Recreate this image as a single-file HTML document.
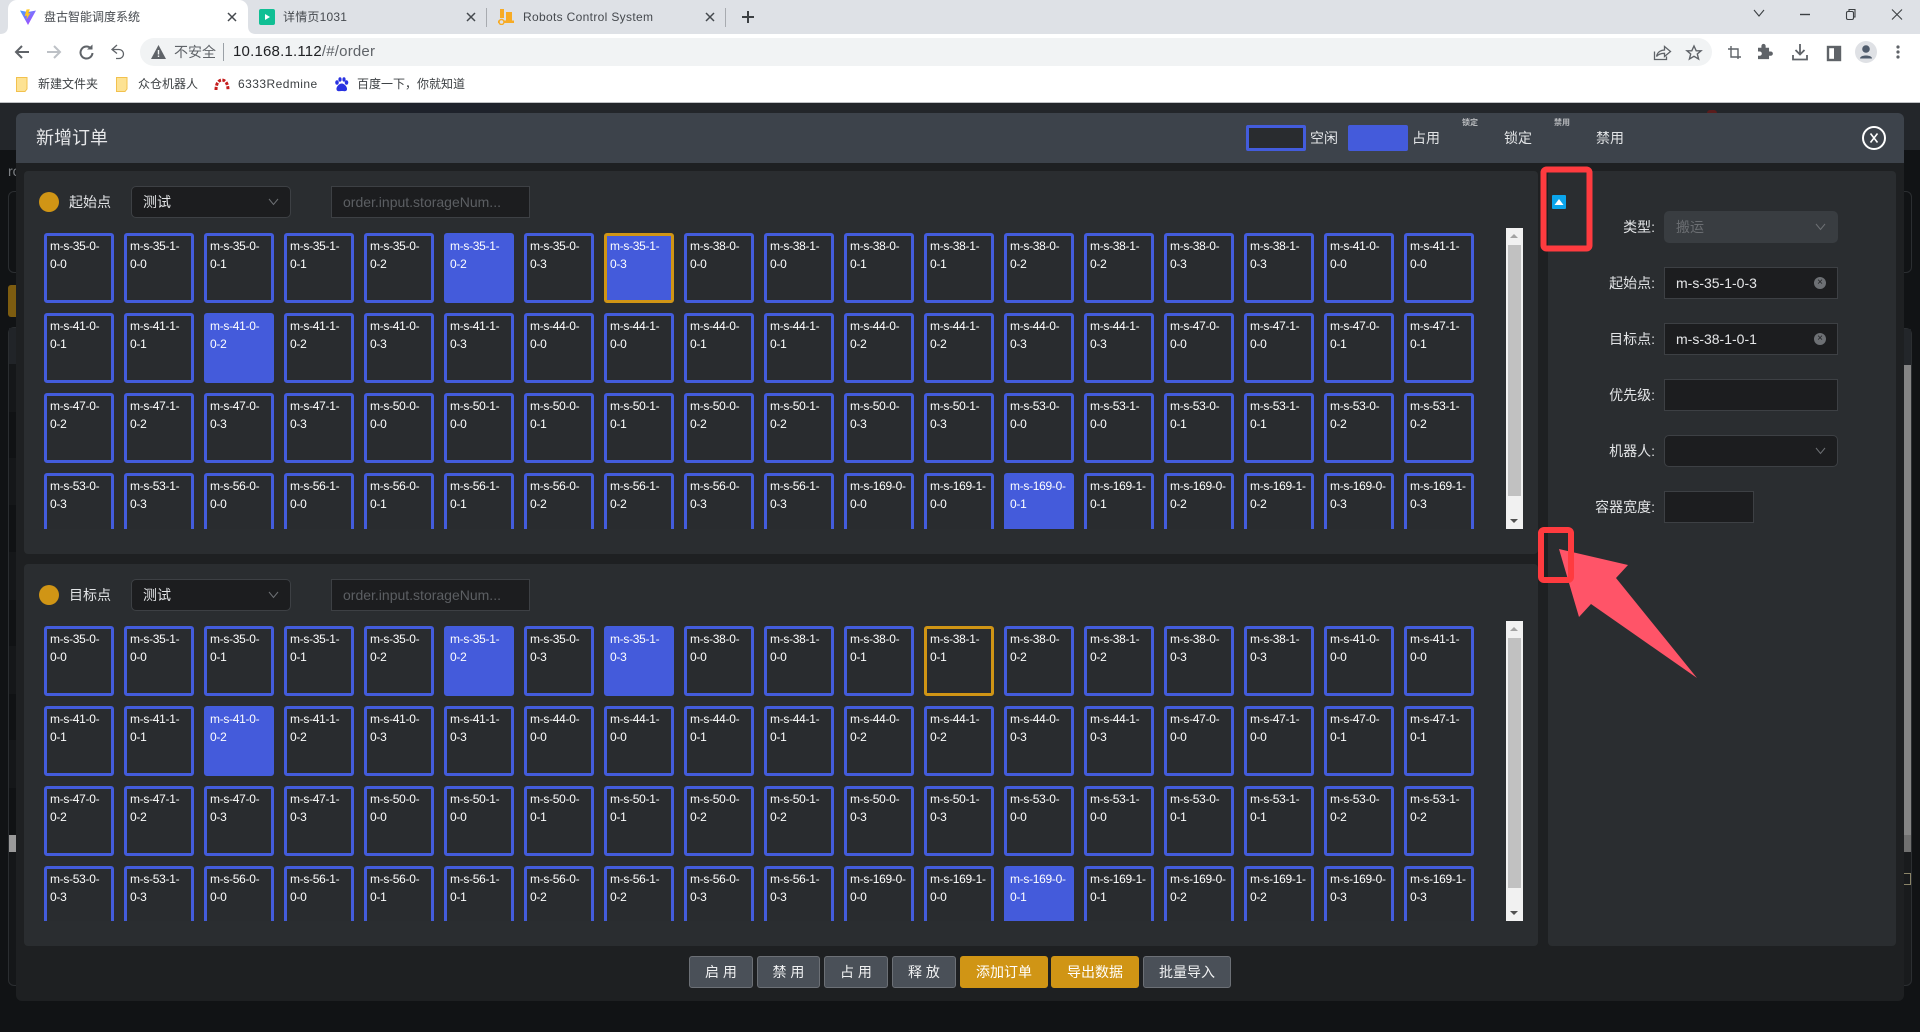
<!DOCTYPE html>
<html lang="zh-CN"><head><meta charset="utf-8"><title>盘古智能调度系统</title>
<style>
html,body{margin:0;padding:0;width:1920px;height:1032px;overflow:hidden;background:#111315}
body{position:relative;font-family:"Liberation Sans","Noto Sans CJK SC",sans-serif;font-size:14px;color:#e2e4e6}
div,span,svg{position:absolute;box-sizing:border-box}
.t{white-space:nowrap;line-height:20px}
.g{left:44px;width:1440px;height:301px;overflow:hidden;display:flex;flex-wrap:wrap;gap:10px;align-content:flex-start;padding-top:5px}
.g b{display:block;box-sizing:border-box;width:70px;height:70px;border:3px solid #435cdc;border-radius:3px;background:#292c2f;padding:1px 0 0 3px;font-weight:400;font-size:12px;line-height:18px;letter-spacing:-.3px;color:#fff;white-space:nowrap}
.g b.u{background:#445bdb}
.g b.o{border-color:#d09515}
.sb{left:1506px;width:17px;height:301px;background:#f1f1f1}
.sb i{position:absolute;left:2px;width:13px;background:#c1c1c1;top:17px;height:251px}
.sb u{position:absolute;left:4px;top:6px;width:0;height:0;border:4px solid transparent;border-top:0;border-bottom:4px solid #a3a3a3}
.sb s{position:absolute;left:4px;bottom:6px;width:0;height:0;border:4px solid transparent;border-bottom:0;border-top:4px solid #505050}
.p{background:#2a2d30;border-radius:4px}
.in{background:#1c1d1f;border:1px solid #3d4044;height:32px}
.sel{border-radius:5px}
.lb{right:265px;text-align:right;line-height:32px;white-space:nowrap;color:#e2e4e6}
.btn{top:956px;height:32px;border-radius:3px;background:#4a5058;border:1px solid #6c7076;color:#f0f1f2;text-align:center;line-height:30px;font-size:14px;white-space:nowrap}
.btn.y{background:#d09515;border-color:#d09515;color:#fff}
.cl{width:12px;height:12px;border-radius:50%;background:#6d7074;color:#1d1e20;font-size:10px;line-height:11px;text-align:center}
.bm{top:74px;font-size:12px;color:#3c4043;white-space:nowrap;line-height:20px}
.tab{top:7px;font-size:12px;color:#45494e;white-space:nowrap;line-height:20px}
</style></head><body>

<!-- dimmed page behind -->
<div style="left:0;top:103px;width:1920px;height:47px;background:#23262a"></div>
<div style="left:400px;top:103px;width:100px;height:10px;background:#1e222b"></div>
<div style="left:1707px;top:110px;width:10px;height:3px;background:#5a1c1c;border-radius:5px 5px 0 0"></div>
<div class="t" style="left:8px;top:161px;font-size:14px;color:#7d8084">ro</div>
<div style="left:8px;top:191px;width:20px;height:82px;border:1px solid #2b2e31;border-radius:6px"></div>
<div style="left:8px;top:285px;width:12px;height:32px;background:#7d5c10;border-radius:3px"></div>
<div style="left:8px;top:327px;width:20px;height:659px;border:1px solid #2b2e31;border-radius:6px;background:#151719"></div>
<div style="left:9px;top:328px;width:10px;height:36px;background:#212428"></div>
<div style="left:9px;top:412px;width:7px;height:46px;background:#101214"></div>
<div style="left:9px;top:505px;width:7px;height:47px;background:#101214"></div>
<div style="left:9px;top:600px;width:7px;height:46px;background:#101214"></div>
<div style="left:9px;top:694px;width:7px;height:46px;background:#101214"></div>
<div style="left:9px;top:788px;width:7px;height:47px;background:#101214"></div>
<div style="left:9px;top:835px;width:7px;height:17px;background:#9a9a9a"></div>
<div style="left:1896px;top:191px;width:16px;height:82px;border:1px solid #2b2e31;border-radius:6px"></div>
<div style="left:1896px;top:328px;width:16px;height:658px;border:1px solid #2b2e31;border-radius:6px;background:#191b1d"></div>
<div style="left:1904px;top:329px;width:7px;height:36px;background:#23262a"></div>
<div style="left:1904px;top:365px;width:7px;height:470px;background:#858585"></div>
<div style="left:1904px;top:835px;width:7px;height:17px;background:#707070"></div>
<div style="left:1904px;top:873px;width:7px;height:12px;border:1px solid #8a8468;border-left:0"></div>

<!-- browser chrome -->
<div style="left:0;top:0;width:1920px;height:34px;background:#dee1e6"></div>
<div style="left:0;top:34px;width:1920px;height:68px;background:#fff"></div>
<div style="left:0;top:102px;width:1920px;height:1px;background:#bfc1c4"></div>
<div style="left:8px;top:0;width:240px;height:34px;background:#fff;border-radius:9px 9px 0 0"></div>
<svg style="left:0;top:24px" width="256" height="10"><path d="M0 10Q8 10 8 2V10ZM248 2Q248 10 256 10H248Z" fill="#fff"/></svg>

<svg style="left:19px;top:8px" width="18" height="18" viewBox="0 0 18 18"><defs><linearGradient id="vg" x1="0" y1="0" x2="1" y2="1"><stop offset="0" stop-color="#41a6ff"/><stop offset="1" stop-color="#bd34fe"/></linearGradient></defs><path d="M1 2.500L9 17 17 2.500 9 4Z" fill="url(#vg)"/><path d="M7.500 1.500L5.800 8 8 7.600 7.400 11.500 11.500 5 9.200 5.500 10.800 1.200Z" fill="#ffc820"/></svg>
<span class="tab" style="left:44px">盘古智能调度系统</span>
<svg style="left:227px;top:12px" width="10" height="10"><path d="M1 1L9 9M9 1L1 9" stroke="#45494e" stroke-width="1.500"/></svg>

<svg style="left:259px;top:9px" width="16" height="16"><rect width="16" height="16" rx="2" fill="#10bf94"/><path d="M6 5L11 8 6 11Z" fill="#fff"/></svg>
<span class="tab" style="left:283px;letter-spacing:.2px">详情页1031</span>
<svg style="left:466px;top:12px" width="10" height="10"><path d="M1 1L9 9M9 1L1 9" stroke="#45494e" stroke-width="1.500"/></svg>
<div style="left:486px;top:8px;width:1px;height:19px;background:#a8abb0"></div>

<svg style="left:498px;top:9px" width="16" height="16"><path d="M2 0H6V9H2ZM8 3H14V12H8Z" fill="#f7ab25"/><path d="M0 11.500H16V14H0Z" fill="#f7ab25"/><circle cx="3.500" cy="13" r="2.500" fill="#dee1e6" stroke="#f7ab25" stroke-width="1.500"/></svg>
<span class="tab" style="left:523px;letter-spacing:.33px">Robots Control System</span>
<svg style="left:705px;top:12px" width="10" height="10"><path d="M1 1L9 9M9 1L1 9" stroke="#45494e" stroke-width="1.500"/></svg>
<div style="left:725px;top:8px;width:1px;height:19px;background:#a8abb0"></div>
<svg style="left:742px;top:11px" width="12" height="12"><path d="M6 0V12M0 6H12" stroke="#3c4043" stroke-width="2"/></svg>

<svg style="left:1620px;top:0" width="300" height="34" fill="none" stroke="#3c4043" stroke-width="1.100"><path d="M134 10L139 16 144 10"/><path d="M180 14.500H190" stroke-width="1.400"/><rect x="226.500" y="11.500" width="7" height="8" rx="1.500"/><path d="M229 11V9.500H235V17H234"/><path d="M272 9.500L282 19.500M282 9.500L272 19.500"/></svg>

<div style="left:140px;top:38px;width:1572px;height:28px;border-radius:14px;background:#f1f3f4"></div>
<svg style="left:14px;top:44px" width="112" height="16" fill="none" stroke-width="2"><path d="M15 8H2M8 2L2 8 8 14" stroke="#5f6368"/><path d="M33 8H46M40 2L46 8 40 14" stroke="#bdc1c6"/><path d="M77 4.500A6 6 0 1 0 78.500 9" stroke="#5f6368"/><path d="M73 5H78.500V0Z" fill="#5f6368" stroke="none" transform="translate(0 .5)"/><path d="M103 1L98 5.500 103 9.500M98.500 5.500H105A4.500 4.500 0 0 1 105 14.500H102" stroke="#5f6368" stroke-width="1.300"/></svg>
<svg style="left:151px;top:45px" width="15" height="14"><path d="M7.500 0L15 14H0Z" fill="#5f6368"/><path d="M6.800 5H8.200V9.500H6.800ZM6.800 10.500H8.200V12H6.800Z" fill="#f1f3f4"/></svg>
<span class="t" style="left:174px;top:42px;font-size:14px;color:#5f6368">不安全</span>
<div style="left:223px;top:43px;width:1px;height:18px;background:#9aa0a6"></div>
<span class="t" style="left:233px;top:42px;font-size:15px;letter-spacing:.2px;color:#202124">10.168.1.112<span style="position:static;color:#5f6368">/#/order</span></span>

<svg style="left:1650px;top:42px" width="260" height="20" fill="none" stroke="#5f6368" stroke-width="1.300"><g transform="translate(1.500 .5)"><path d="M3 9V17H15V14"/><path d="M5 14C6 9 10 7.500 13 7.500V4L19 9 13 14V10.800C10 10.800 7 11.500 5 14Z"/></g><path d="M44 4L46.200 8.800H51L47.300 12 48.600 17 44 14.300 39.400 17 40.700 12 37 8.800H41.800Z" stroke-width="1.400"/><path d="M81 4V15H91M78 7H88V17" stroke-width="1.400"/><g transform="translate(108 4) scale(.85)"><path d="M0 2H4V0A2.300 2.300 0 0 1 9 0V2H13V6.500H15A2.500 2.500 0 0 1 15 11.500H13V15.500H0V11.500H2A2.500 2.500 0 0 0 2 6.500H0Z" fill="#5f6368" stroke="none"/></g><path d="M150 2V12M145.500 8L150 12.500 154.500 8M143 13V17.500H157V13" stroke-width="1.800"/><rect x="178" y="5" width="12" height="13" stroke-width="2.400"/><rect x="184" y="5" width="6" height="13" fill="#5f6368" stroke="none"/></svg>
<div style="left:1855px;top:41px;width:22px;height:22px;border-radius:50%;background:#dfe1e5"></div>
<svg style="left:1855px;top:41px" width="22" height="22"><circle cx="11" cy="8" r="3.800" fill="#4f5b6b"/><path d="M5 17.500C5 13.500 17 13.500 17 17.500Z" fill="#4f5b6b"/></svg>
<svg style="left:1895px;top:45px" width="6" height="14" fill="#5f6368"><circle cx="3" cy="2" r="1.600"/><circle cx="3" cy="7" r="1.600"/><circle cx="3" cy="12" r="1.600"/></svg>

<svg style="left:16px;top:77px" width="112" height="15"><path d="M.5.500H11V12L9 14.500H.5Z" fill="#fde293" stroke="#f2c14e"/><path d="M100.500.500H111V12L109 14.500H100.500Z" fill="#fde293" stroke="#f2c14e"/></svg>
<span class="bm" style="left:38px">新建文件夹</span>
<span class="bm" style="left:138px">众仓机器人</span>
<svg style="left:214px;top:78px" width="16" height="13" fill="none"><path d="M2 12C2 5 5 2 8 2S14 5 14 12" stroke="#c41e1e" stroke-width="3" stroke-dasharray="3 1.400"/></svg>
<span class="bm" style="left:238px;letter-spacing:.45px">6333Redmine</span>
<svg style="left:334px;top:77px" width="15" height="15" fill="#2932e1"><ellipse cx="3" cy="5.500" rx="1.800" ry="2.300"/><ellipse cx="6" cy="2.500" rx="1.600" ry="2.200"/><ellipse cx="10" cy="2.500" rx="1.600" ry="2.200"/><ellipse cx="12.500" cy="5.500" rx="1.800" ry="2.300"/><path d="M7.700 6.500C5 6.500 2 10 2.500 12.500 3 15 6 14 7.700 14S12.500 15 13 12.500 10.500 6.500 7.700 6.500Z"/></svg>
<span class="bm" style="left:357px">百度一下，你就知道</span>

<!-- modal -->
<div style="left:16px;top:113px;width:1888px;height:888px;background:#1e2022;border-radius:6px"></div>
<div style="left:16px;top:113px;width:1888px;height:50px;background:#3d434b;border-radius:6px 6px 0 0"></div>
<span class="t" style="left:36px;top:126px;font-size:18px;line-height:24px;color:#e6e7e9">新增订单</span>

<div style="left:1246px;top:125px;width:60px;height:26px;background:#292c2f;border:3px solid #435cdc;border-radius:2px"></div>
<span class="t" style="left:1310px;top:128px">空闲</span>
<div style="left:1348px;top:125px;width:60px;height:26px;background:#445bdb;border-radius:2px"></div>
<span class="t" style="left:1412px;top:128px">占用</span>
<span class="t" style="left:1462px;top:118px;font-size:8px;line-height:10px;font-weight:700;color:#b8babd">锁定</span>
<span class="t" style="left:1504px;top:128px">锁定</span>
<span class="t" style="left:1554px;top:118px;font-size:8px;line-height:10px;font-weight:700;color:#b8babd">禁用</span>
<span class="t" style="left:1596px;top:128px">禁用</span>
<svg style="left:1862px;top:126px" width="24" height="24" fill="none" stroke="#fff" stroke-width="2"><circle cx="12" cy="12" r="11"/><path d="M8.500 7.500L15.500 16.500M15.500 7.500L8.500 16.500" stroke-width="1.600"/></svg>

<!-- top panel -->
<div class="p" style="left:24px;top:171px;width:1514px;height:383px"></div>
<div style="left:39px;top:192px;width:20px;height:20px;border-radius:50%;background:#d09515"></div>
<span class="t" style="left:69px;top:192px">起始点</span>
<div class="in sel" style="left:131px;top:186px;width:160px"></div>
<span class="t" style="left:143px;top:192px">测试</span>
<svg style="left:268px;top:198px" width="11" height="8" fill="none" stroke="#6d7074"><path d="M1 1L5.500 6.500 10 1"/></svg>
<div class="in" style="left:331px;top:186px;width:199px"></div>
<span class="t" style="left:343px;top:192px;color:#5c5f63">order.input.storageNum...</span>

<div class="g" style="top:228px">
<b>m-s-35-0-<br>0-0</b><b>m-s-35-1-<br>0-0</b><b>m-s-35-0-<br>0-1</b><b>m-s-35-1-<br>0-1</b><b>m-s-35-0-<br>0-2</b><b class="u">m-s-35-1-<br>0-2</b><b>m-s-35-0-<br>0-3</b><b class="u o">m-s-35-1-<br>0-3</b>
<b>m-s-38-0-<br>0-0</b><b>m-s-38-1-<br>0-0</b><b>m-s-38-0-<br>0-1</b><b>m-s-38-1-<br>0-1</b><b>m-s-38-0-<br>0-2</b><b>m-s-38-1-<br>0-2</b><b>m-s-38-0-<br>0-3</b><b>m-s-38-1-<br>0-3</b>
<b>m-s-41-0-<br>0-0</b><b>m-s-41-1-<br>0-0</b><b>m-s-41-0-<br>0-1</b><b>m-s-41-1-<br>0-1</b><b class="u">m-s-41-0-<br>0-2</b><b>m-s-41-1-<br>0-2</b><b>m-s-41-0-<br>0-3</b><b>m-s-41-1-<br>0-3</b>
<b>m-s-44-0-<br>0-0</b><b>m-s-44-1-<br>0-0</b><b>m-s-44-0-<br>0-1</b><b>m-s-44-1-<br>0-1</b><b>m-s-44-0-<br>0-2</b><b>m-s-44-1-<br>0-2</b><b>m-s-44-0-<br>0-3</b><b>m-s-44-1-<br>0-3</b>
<b>m-s-47-0-<br>0-0</b><b>m-s-47-1-<br>0-0</b><b>m-s-47-0-<br>0-1</b><b>m-s-47-1-<br>0-1</b><b>m-s-47-0-<br>0-2</b><b>m-s-47-1-<br>0-2</b><b>m-s-47-0-<br>0-3</b><b>m-s-47-1-<br>0-3</b>
<b>m-s-50-0-<br>0-0</b><b>m-s-50-1-<br>0-0</b><b>m-s-50-0-<br>0-1</b><b>m-s-50-1-<br>0-1</b><b>m-s-50-0-<br>0-2</b><b>m-s-50-1-<br>0-2</b><b>m-s-50-0-<br>0-3</b><b>m-s-50-1-<br>0-3</b>
<b>m-s-53-0-<br>0-0</b><b>m-s-53-1-<br>0-0</b><b>m-s-53-0-<br>0-1</b><b>m-s-53-1-<br>0-1</b><b>m-s-53-0-<br>0-2</b><b>m-s-53-1-<br>0-2</b><b>m-s-53-0-<br>0-3</b><b>m-s-53-1-<br>0-3</b>
<b>m-s-56-0-<br>0-0</b><b>m-s-56-1-<br>0-0</b><b>m-s-56-0-<br>0-1</b><b>m-s-56-1-<br>0-1</b><b>m-s-56-0-<br>0-2</b><b>m-s-56-1-<br>0-2</b><b>m-s-56-0-<br>0-3</b><b>m-s-56-1-<br>0-3</b>
<b>m-s-169-0-<br>0-0</b><b>m-s-169-1-<br>0-0</b><b class="u">m-s-169-0-<br>0-1</b><b>m-s-169-1-<br>0-1</b><b>m-s-169-0-<br>0-2</b><b>m-s-169-1-<br>0-2</b><b>m-s-169-0-<br>0-3</b><b>m-s-169-1-<br>0-3</b>
</div>
<div class="sb" style="top:228px"><u></u><i></i><s></s></div>

<!-- bottom panel -->
<div class="p" style="left:24px;top:564px;width:1514px;height:382px"></div>
<div style="left:39px;top:585px;width:20px;height:20px;border-radius:50%;background:#d09515"></div>
<span class="t" style="left:69px;top:585px">目标点</span>
<div class="in sel" style="left:131px;top:579px;width:160px"></div>
<span class="t" style="left:143px;top:585px">测试</span>
<svg style="left:268px;top:591px" width="11" height="8" fill="none" stroke="#6d7074"><path d="M1 1L5.500 6.500 10 1"/></svg>
<div class="in" style="left:331px;top:579px;width:199px"></div>
<span class="t" style="left:343px;top:585px;color:#5c5f63">order.input.storageNum...</span>

<div class="g" style="top:621px;height:300px">
<b>m-s-35-0-<br>0-0</b><b>m-s-35-1-<br>0-0</b><b>m-s-35-0-<br>0-1</b><b>m-s-35-1-<br>0-1</b><b>m-s-35-0-<br>0-2</b><b class="u">m-s-35-1-<br>0-2</b><b>m-s-35-0-<br>0-3</b><b class="u">m-s-35-1-<br>0-3</b>
<b>m-s-38-0-<br>0-0</b><b>m-s-38-1-<br>0-0</b><b>m-s-38-0-<br>0-1</b><b class="o">m-s-38-1-<br>0-1</b><b>m-s-38-0-<br>0-2</b><b>m-s-38-1-<br>0-2</b><b>m-s-38-0-<br>0-3</b><b>m-s-38-1-<br>0-3</b>
<b>m-s-41-0-<br>0-0</b><b>m-s-41-1-<br>0-0</b><b>m-s-41-0-<br>0-1</b><b>m-s-41-1-<br>0-1</b><b class="u">m-s-41-0-<br>0-2</b><b>m-s-41-1-<br>0-2</b><b>m-s-41-0-<br>0-3</b><b>m-s-41-1-<br>0-3</b>
<b>m-s-44-0-<br>0-0</b><b>m-s-44-1-<br>0-0</b><b>m-s-44-0-<br>0-1</b><b>m-s-44-1-<br>0-1</b><b>m-s-44-0-<br>0-2</b><b>m-s-44-1-<br>0-2</b><b>m-s-44-0-<br>0-3</b><b>m-s-44-1-<br>0-3</b>
<b>m-s-47-0-<br>0-0</b><b>m-s-47-1-<br>0-0</b><b>m-s-47-0-<br>0-1</b><b>m-s-47-1-<br>0-1</b><b>m-s-47-0-<br>0-2</b><b>m-s-47-1-<br>0-2</b><b>m-s-47-0-<br>0-3</b><b>m-s-47-1-<br>0-3</b>
<b>m-s-50-0-<br>0-0</b><b>m-s-50-1-<br>0-0</b><b>m-s-50-0-<br>0-1</b><b>m-s-50-1-<br>0-1</b><b>m-s-50-0-<br>0-2</b><b>m-s-50-1-<br>0-2</b><b>m-s-50-0-<br>0-3</b><b>m-s-50-1-<br>0-3</b>
<b>m-s-53-0-<br>0-0</b><b>m-s-53-1-<br>0-0</b><b>m-s-53-0-<br>0-1</b><b>m-s-53-1-<br>0-1</b><b>m-s-53-0-<br>0-2</b><b>m-s-53-1-<br>0-2</b><b>m-s-53-0-<br>0-3</b><b>m-s-53-1-<br>0-3</b>
<b>m-s-56-0-<br>0-0</b><b>m-s-56-1-<br>0-0</b><b>m-s-56-0-<br>0-1</b><b>m-s-56-1-<br>0-1</b><b>m-s-56-0-<br>0-2</b><b>m-s-56-1-<br>0-2</b><b>m-s-56-0-<br>0-3</b><b>m-s-56-1-<br>0-3</b>
<b>m-s-169-0-<br>0-0</b><b>m-s-169-1-<br>0-0</b><b class="u">m-s-169-0-<br>0-1</b><b>m-s-169-1-<br>0-1</b><b>m-s-169-0-<br>0-2</b><b>m-s-169-1-<br>0-2</b><b>m-s-169-0-<br>0-3</b><b>m-s-169-1-<br>0-3</b>
</div>
<div class="sb" style="top:621px;height:300px"><u></u><i style="height:250px"></i><s></s></div>

<!-- right panel -->
<div class="p" style="left:1548px;top:171px;width:348px;height:775px"></div>
<div class="lb" style="top:211px">类型:</div>
<div style="left:1664px;top:211px;width:174px;height:32px;background:#393d41;border-radius:5px"></div>
<span class="t" style="left:1676px;top:217px;color:#6b6e72">搬运</span>
<svg style="left:1815px;top:223px" width="11" height="8" fill="none" stroke="#6d7074"><path d="M1 1L5.500 6.500 10 1"/></svg>

<div class="lb" style="top:267px">起始点:</div>
<div class="in" style="left:1664px;top:267px;width:174px"></div>
<span class="t" style="left:1676px;top:273px;color:#e6e7e9">m-s-35-1-0-3</span>
<div class="cl" style="left:1814px;top:277px">×</div>

<div class="lb" style="top:323px">目标点:</div>
<div class="in" style="left:1664px;top:323px;width:174px"></div>
<span class="t" style="left:1676px;top:329px;color:#e6e7e9">m-s-38-1-0-1</span>
<div class="cl" style="left:1814px;top:333px">×</div>

<div class="lb" style="top:379px">优先级:</div>
<div class="in" style="left:1664px;top:379px;width:174px"></div>

<div class="lb" style="top:435px">机器人:</div>
<div class="in sel" style="left:1664px;top:435px;width:174px"></div>
<svg style="left:1815px;top:447px" width="11" height="8" fill="none" stroke="#6d7074"><path d="M1 1L5.500 6.500 10 1"/></svg>

<div class="lb" style="top:491px">容器宽度:</div>
<div class="in" style="left:1664px;top:491px;width:90px"></div>

<!-- footer -->
<div class="btn" style="left:689px;width:64px">启 用</div>
<div class="btn" style="left:757px;width:63px">禁 用</div>
<div class="btn" style="left:824px;width:64px">占 用</div>
<div class="btn" style="left:892px;width:64px">释 放</div>
<div class="btn y" style="left:960px;width:88px">添加订单</div>
<div class="btn y" style="left:1051px;width:88px">导出数据</div>
<div class="btn" style="left:1143px;width:88px">批量导入</div>

<!-- annotations -->
<svg style="left:0;top:0;pointer-events:none" width="1920" height="1032">
<polygon points="1559,549 1628,565 1616,578 1697,678 1591,604 1579,617" fill="#ff5468"/>
<rect x="1543.500" y="169.500" width="46" height="79" rx="3" fill="none" stroke="#ff3b3f" stroke-width="6"/>
<rect x="1541" y="530" width="30" height="50" rx="3" fill="none" stroke="#ff3b3f" stroke-width="6"/>
<rect x="1552" y="195" width="14" height="14" rx="1" fill="#0ba5ec"/>
<path d="M1559 199L1563.500 205H1554.500Z" fill="#fff"/>
</svg>
</body></html>
